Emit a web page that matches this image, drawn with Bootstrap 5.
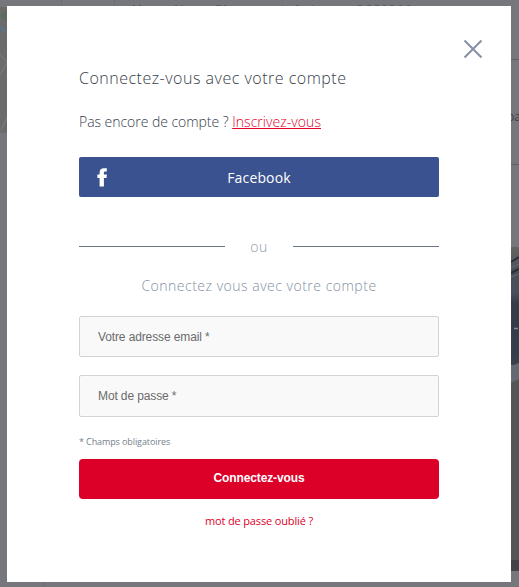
<!DOCTYPE html>
<html lang="fr">
<head>
<meta charset="utf-8">
<meta name="viewport" content="width=device-width, initial-scale=1">
<title>Connexion</title>
<link href="https://cdn.jsdelivr.net/npm/bootstrap@5.3.0/dist/css/bootstrap.min.css" rel="stylesheet">
<style>
body{background:#76777c;font-family:"Open Sans","Noto Sans",sans-serif;font-weight:300;height:587px;color:#36404a}
.scene{z-index:0}
.panel{z-index:1;width:504px;height:576px;margin:6px 0 0 7px;padding:31px 72px 0;background:#fff}
.closer{width:24px;height:24px;margin-right:-46px;line-height:0}
.heading{font-size:16px;line-height:24px;height:24px;margin:5px 0 0;font-weight:300;white-space:nowrap;letter-spacing:.5px}
.signup{font-size:14px;line-height:20px;margin:22px 0 0;white-space:nowrap;letter-spacing:-.04px}
.signup a{color:#e4002b;letter-spacing:.05px}
.fb{height:40px;margin-top:25px;background:#3a5290;border-radius:2px;color:#fff;font-size:14px;font-weight:400;letter-spacing:.15px}
.fb:hover{background:#3a5290;color:#fff}
.fb svg{left:18px;top:11px}
.divider{margin-top:38px;height:22px;color:#8f9bad;font-size:14px;letter-spacing:.5px}
.rule{width:146px;height:1px;background:#6b7787}
.sub{margin:18px 0 0;height:22px;line-height:22px;font-size:14px;color:#8490a4;white-space:nowrap;letter-spacing:.5px}
.field{font-family:"Liberation Sans",Arial,sans-serif;font-size:12px;background:#f9f9f9;border:1px solid #d3d3d3;border-radius:2px;padding:0 18px;height:41px;font-weight:400;letter-spacing:-.12px}
.field::placeholder{color:#6b6b6b;opacity:1}
.email{margin-top:19px}
.pass{margin-top:18px;height:42px}
.note{font-size:9px;line-height:14px;margin:18px 0 0;color:#75808c;font-weight:400;letter-spacing:-.1px}
.go{height:40px;margin-top:10px;padding:0 0 3px;background:#dc0028;border-radius:4px;color:#fff;font:700 12px "Liberation Sans",Arial,sans-serif;letter-spacing:-.12px}
.forgot{font-size:11px;line-height:16px;margin-top:14px;color:#dc0028;font-weight:400;letter-spacing:-.14px}
</style>
</head>
<body class="m-0 overflow-hidden position-relative">
<svg class="scene position-absolute top-0 start-0" width="519" height="587" viewBox="0 0 519 587" aria-hidden="true">
<defs><linearGradient id="car" x1="0" y1="0" x2="0" y2="1"><stop offset="0" stop-color="#63635f"/><stop offset=".1" stop-color="#585b62"/><stop offset=".2" stop-color="#4a4e57"/><stop offset=".38" stop-color="#4a515c"/><stop offset=".48" stop-color="#353b47"/><stop offset=".9" stop-color="#353d4b"/><stop offset="1" stop-color="#3c404a"/></linearGradient></defs>
<path d="M0 0h519v587H0z" fill="#76777c"/><path d="M61.500 0v6M114.500 0v6M44.500 582v5" stroke="#6b6c71"/>
<path d="M133 5.500h2M139 5.500h2M175 5.500h2M181 5.500h2M216 5.500h5M224 5.500h2M282 5.500h1M296 5.500h3M312 5.500h1M358 5.500h4M367 5.500h4M375 5.500h4M383 5.500h3M390 5.500h4M399 5.500h3M407 5.500h3" stroke="#5c5d62"/>
<path d="M0 7h7v126H0z" fill="#6c6b6b"/><path d="M0 16l7-8v14z" fill="#5e6b5e"/><path d="M0 27l7 6" stroke="#53779d" stroke-width="1.500"/><path d="M0 55l7 7-7 13M7 117l-6 14" stroke="#7d7d7d" fill="none"/>
<path d="M511 59.500h8M511 164.500h8" stroke="#606167"/>
<text x="507" y="121" font-family="Open Sans" font-size="12" font-weight="400" fill="#3c3f45">pa</text>
<path d="M511 247h8v118h-8z" fill="url(#car)"/><path d="M511 262l8-5M511 273l8-4" stroke="#2b2e35" stroke-width="2"/><path d="M511 268l8-4M511 277l8-3" stroke="#646871"/><path d="M514 328.500h4" stroke="#858a94" stroke-width="1.500"/>
<path d="M511 366l8-3v16l-8 4z" fill="#656971"/><path d="M511 383l8-4v181h-8z" fill="#545557"/><path d="M511 560h8v11h-8z" fill="#424347"/>
</svg>
<main class="panel position-relative d-flex flex-column">
<button class="closer btn p-0 border-0 align-self-end" type="button" aria-label="Fermer"><svg width="20" height="20" viewBox="0 0 20 20"><path d="M1.500 1.500l17 17M18.500 1.500l-17 17" stroke="#8490a4" stroke-width="2"/></svg></button>
<h1 class="heading">Connectez-vous avec votre compte</h1>
<p class="signup">Pas encore de compte ? <a href="#">Inscrivez-vous</a></p>
<button class="fb btn border-0 p-0 w-100 position-relative" type="button"><svg class="position-absolute" width="11" height="19" viewBox="0 0 11 19"><path d="M2.600 18.500V10H.4V6.500h2.200V4.700C2.600 1.700 4.200.3 7 .3h2.800v3.300H8.300c-1.200 0-1.400.5-1.400 1.500v1.400h3L9.500 10H6.900v8.500z" fill="#fff"/></svg><span>Facebook</span></button>
<div class="divider d-flex justify-content-between align-items-center"><span class="rule"></span><span>ou</span><span class="rule"></span></div>
<p class="sub text-center">Connectez vous avec votre compte</p>
<input class="field email form-control" type="email" placeholder="Votre adresse email *" aria-label="Votre adresse email">
<input class="field pass form-control" type="password" placeholder="Mot de passe *" aria-label="Mot de passe">
<p class="note">* Champs obligatoires</p>
<button class="go btn border-0 w-100" type="button">Connectez-vous</button>
<a class="forgot text-center text-decoration-none" href="#">mot de passe oublié ?</a>
</main>
<script src="https://cdn.jsdelivr.net/npm/bootstrap@5.3.0/dist/js/bootstrap.bundle.min.js"></script>
</body>
</html>
